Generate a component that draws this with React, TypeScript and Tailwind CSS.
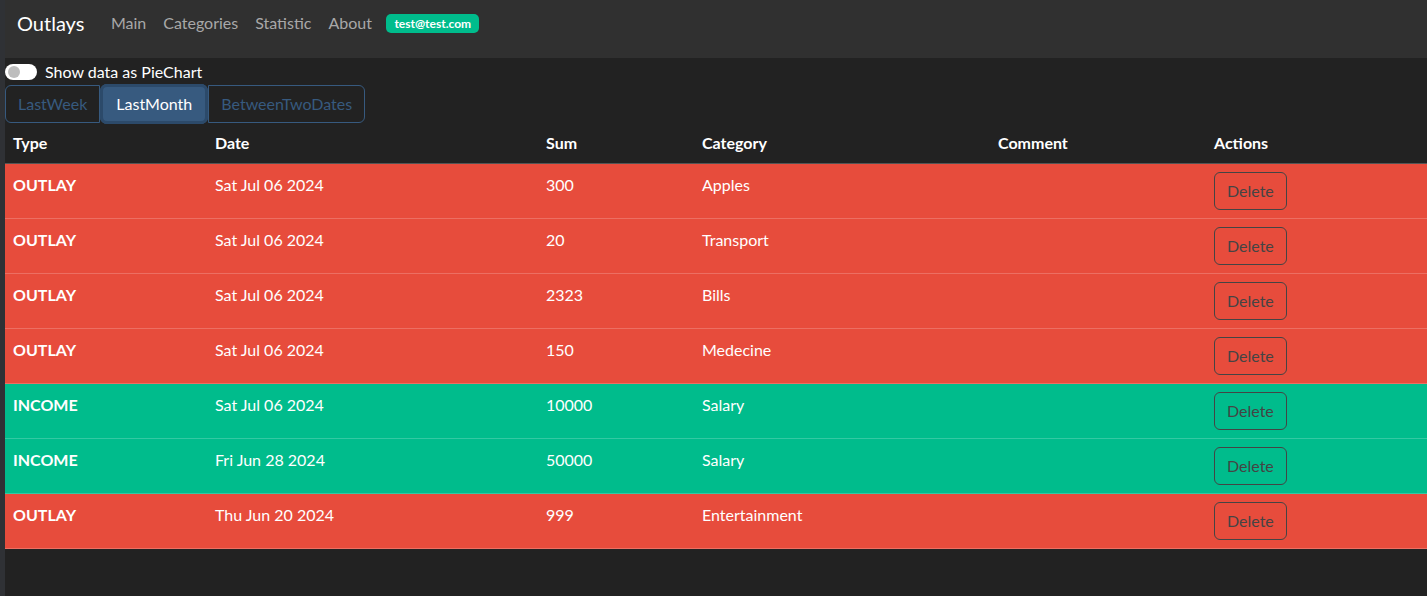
import React from "react";

type Row = {
  type: "OUTLAY" | "INCOME";
  date: string;
  sum: string;
  category: string;
  comment: string;
};

const rows: Row[] = [
  { type: "OUTLAY", date: "Sat Jul 06 2024", sum: "300", category: "Apples", comment: "" },
  { type: "OUTLAY", date: "Sat Jul 06 2024", sum: "20", category: "Transport", comment: "" },
  { type: "OUTLAY", date: "Sat Jul 06 2024", sum: "2323", category: "Bills", comment: "" },
  { type: "OUTLAY", date: "Sat Jul 06 2024", sum: "150", category: "Medecine", comment: "" },
  { type: "INCOME", date: "Sat Jul 06 2024", sum: "10000", category: "Salary", comment: "" },
  { type: "INCOME", date: "Fri Jun 28 2024", sum: "50000", category: "Salary", comment: "" },
  { type: "OUTLAY", date: "Thu Jun 20 2024", sum: "999", category: "Entertainment", comment: "" },
];

const cols = "grid grid-cols-[202px_331px_156px_296px_216px_1fr]";

const App = () => {
  return (
    <div className="flex min-h-[596px] bg-[#222222] text-[16px] leading-[24px] text-white font-['Lato',_'Liberation_Sans',_sans-serif]">
      {/* left edge strip */}
      <div className="w-[5px] shrink-0 bg-[#2f3135]" />

      <div className="flex-1 flex flex-col">
        {/* Navbar */}
        <nav className="h-[58px] bg-[#303030] flex items-start pt-[11px] pl-[12px]">
          <span className="text-[20px] leading-[24px] text-white mr-[18px]">Outlays</span>
          <div className="flex items-center pt-[1px]">
            <a className="px-[8.5px] text-[#a8a8a8] leading-[22px]">Main</a>
            <a className="px-[8.5px] text-[#a8a8a8] leading-[22px]">Categories</a>
            <a className="px-[8.5px] text-[#a8a8a8] leading-[22px]">Statistic</a>
            <a className="px-[8.5px] text-[#a8a8a8] leading-[22px]">About</a>
            <span className="ml-[6px] h-[19px] px-[8px] rounded-[5px] bg-[#00bc8c] text-white text-[12px] font-bold leading-[19px]">
              test@test.com
            </span>
          </div>
        </nav>

        {/* Switch */}
        <div className="flex items-center h-[26px] mt-[1px]">
          <div className="w-[32px] h-[16px] rounded-full bg-white flex items-center pl-[3px]">
            <div className="w-[12px] h-[12px] rounded-full bg-[#bdbdbd]" />
          </div>
          <span className="ml-[8px]">Show data as PieChart</span>
        </div>

        {/* Button group */}
        <div className="flex h-[39px] items-start">
          <button className="h-[38px] px-[12px] border border-[#375a7f] rounded-l-[6px] text-[#375a7f]">
            LastWeek
          </button>
          <button className="h-[40px] -mt-[1px] px-[16px] bg-[#375a7f] text-white rounded-[7px] ring-[3px] ring-[#2c4a6a] ring-inset relative z-10">
            LastMonth
          </button>
          <button className="h-[38px] px-[12px] border border-[#375a7f] rounded-r-[6px] text-[#375a7f]">
            BetweenTwoDates
          </button>
        </div>

        {/* Table */}
        <div className="flex flex-col">
          <div className={`${cols} font-bold border-b border-[#555555] h-[40px] items-center pb-[2px]`}>
            <div className="px-2">Type</div>
            <div className="px-2">Date</div>
            <div className="px-2">Sum</div>
            <div className="px-2">Category</div>
            <div className="px-2">Comment</div>
            <div className="px-2">Actions</div>
          </div>
          {rows.map((r, i) => {
            const outlay = r.type === "OUTLAY";
            return (
              <div
                key={i}
                className={`${cols} h-[55px] border-b ${
                  outlay ? "bg-[#e74c3c] border-[#ec6f63]" : "bg-[#00bc8c] border-[#33c9a3]"
                }`}
              >
                <div className="px-2 pt-[9px] font-bold">{r.type}</div>
                <div className="px-2 pt-[9px]">{r.date}</div>
                <div className="px-2 pt-[9px]">{r.sum}</div>
                <div className="px-2 pt-[9px]">{r.category}</div>
                <div className="px-2 pt-[9px]">{r.comment}</div>
                <div className="px-2 pt-[8px]">
                  <button className="h-[38px] px-[12px] border border-[#444444] rounded-[6px] text-[#444444]">
                    Delete
                  </button>
                </div>
              </div>
            );
          })}
        </div>
      </div>
    </div>
  );
};

export default App;
